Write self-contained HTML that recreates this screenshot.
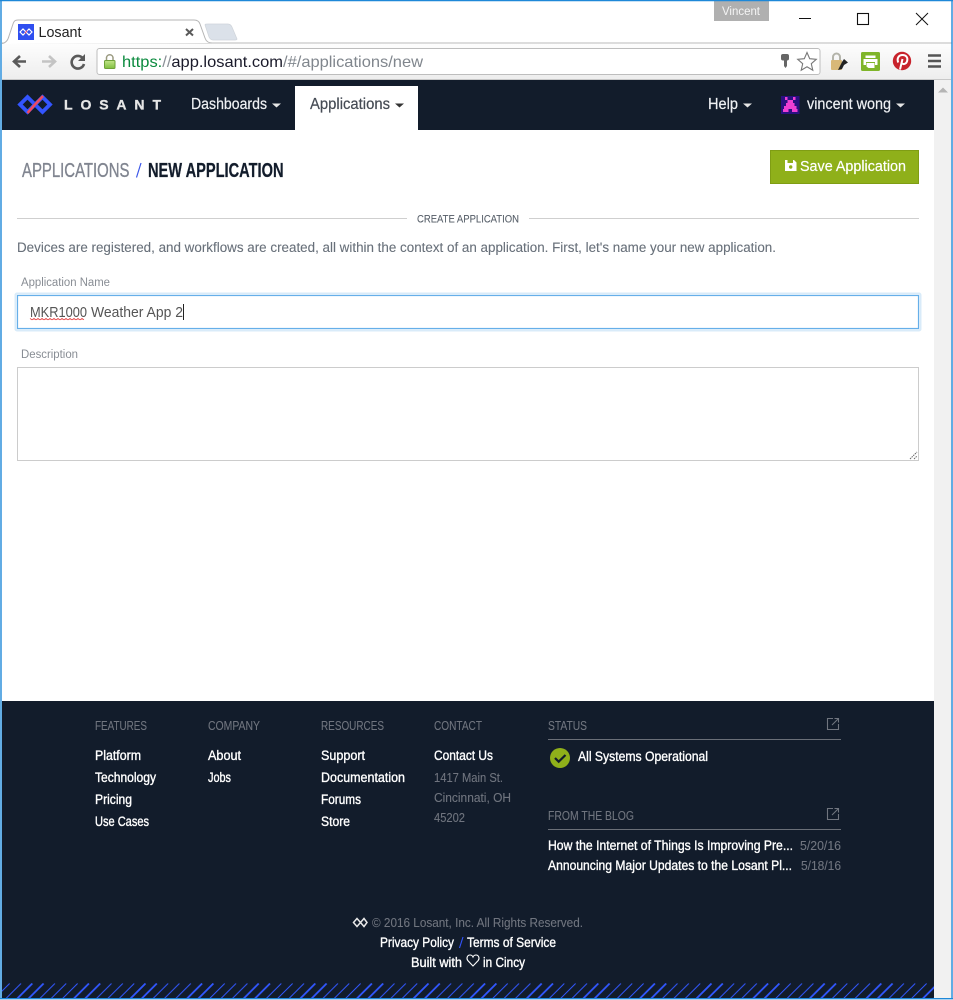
<!DOCTYPE html>
<html lang="en"><head><meta charset="utf-8"><title>Losant</title>
<style>
html,body{margin:0;padding:0;background:#fff;overflow:hidden}
svg{display:block}
text{font-family:"Liberation Sans",sans-serif;white-space:pre}
.l{font-size:13.5px;fill:#fff;stroke:#fff;stroke-width:.35px}
.h{font-size:12.5px;fill:#70757f;stroke:#70757f;stroke-width:.1px}
.g{font-size:13px;fill:#70757f;stroke:#70757f;stroke-width:.1px}
.n{font-size:15.5px;fill:#eef0f3;stroke:#eef0f3;stroke-width:.2px}
</style></head><body>
<svg width="953" height="1000" viewBox="0 0 953 1000" xmlns="http://www.w3.org/2000/svg">
<defs>
<linearGradient id="tb" x1="0" y1="0" x2="0" y2="1"><stop offset="0" stop-color="#fdfdfd"/><stop offset="1" stop-color="#ededed"/></linearGradient>
<linearGradient id="lk" x1="0" y1="0" x2="0" y2="1"><stop offset="0" stop-color="#c3e58a"/><stop offset="1" stop-color="#7fbf3f"/></linearGradient>
<pattern id="st" x="0" y="983" width="56.6" height="15" patternUnits="userSpaceOnUse">
<g stroke="#3157ff" fill="none">
<path d="M6 15.500L21 .5" stroke-width="1"/>
<path d="M17.300 15.500L32.300 .5" stroke-width="1.800"/>
<path d="M28.600 15.500L43.600 .5" stroke-width="1.800"/>
<path d="M39.900 15.500L54.900 .5" stroke-width="1"/>
<path d="M51.200 15.500L66.200 .5" stroke-width="1"/>
<path d="M-5.400 15.500L9.600 .5" stroke-width="1"/>
</g></pattern>
</defs>

<!-- window frame -->
<rect width="953" height="1000" fill="#fff"/>

<!-- tab strip -->
<path d="M2 43H952" stroke="#b9b9b9" fill="none"/>
<path d="M2 43.500C6 43 8 40 9 36L13 24C14 21 15 20 18 20H194C197 20 199 21 200 24L205 38C206 41 208 43 212 43" fill="#fff" stroke="#b5b5b5" stroke-width="1"/>
<path d="M205 25C205 24 206 24 208 24H228C230 24 231 25 232 27L237 39C237 40 236 40 235 40H213C211 40 210 39 209 37Z" fill="#dbe1e9" stroke="#cfd4da" stroke-width=".7"/>
<rect x="18" y="24" width="16" height="16" fill="#2f4ff0"/>
<path d="M20 32L23 29L26 32L23 35ZM26 32L29 29L32 32L29 35Z" fill="none" stroke="#fff" stroke-width="1.200"/>
<path d="M25 33.500L27 30.500" stroke="#f0445a" stroke-width="1"/>
<text x="38.500" y="37" font-size="14.500" fill="#222" textLength="43" lengthAdjust="spacingAndGlyphs">Losant</text>
<path d="M186 29L193 35.500M193 29L186 35.500" stroke="#5a5a5a" stroke-width="2" fill="none"/>

<!-- toolbar -->
<rect x="2" y="44" width="949" height="36" fill="url(#tb)"/>
<rect x="2" y="79" width="949" height="1" fill="#c8c8c8"/>
<path d="M26 61.500H15M20 56L14 61.500L20 67" fill="none" stroke="#5a5a5a" stroke-width="2.600"/>
<path d="M42 61.500H54M49 56L55 61.500L49 67" fill="none" stroke="#c4c4c4" stroke-width="2.600"/>
<path d="M83 58.500A6.300 6.300 0 1 0 84 64" fill="none" stroke="#5a5a5a" stroke-width="2.600"/>
<path d="M85 54V61H78Z" fill="#5a5a5a"/>
<rect x="97" y="48.500" width="723" height="26" rx="2.500" fill="#fff" stroke="#bdbdbd"/>
<rect x="104.500" y="60.500" width="10.500" height="8" rx="1" fill="url(#lk)" stroke="#6ea238"/>
<path d="M106.500 60V57.500A3.300 3.300 0 0 1 113 57.500V60" fill="none" stroke="#9a9a80" stroke-width="1.500"/>
<text y="67" font-size="16" textLength="301" x="122" lengthAdjust="spacingAndGlyphs"><tspan fill="#0b8a3e">https:</tspan><tspan fill="#8a8f96">//</tspan><tspan fill="#1a1a2a">app.losant.com</tspan><tspan fill="#80868d">/#/applications/new</tspan></text>
<!-- key & star -->
<rect x="781" y="54" width="8" height="6.500" rx="2" fill="#666"/>
<path d="M784 60H787V66L785.500 68L784 66Z" fill="#666"/>
<path d="M807 52.500L809.700 58.700L816.300 59.300L811.300 63.700L812.800 70.200L807 66.800L801.200 70.200L802.700 63.700L797.700 59.300L804.300 58.700Z" fill="#fff" stroke="#777" stroke-width="1.100"/>
<!-- extension: lock -->
<rect x="831" y="60" width="11" height="10" rx="1" fill="#d8b878"/>
<path d="M833 60V57A3.500 3.500 0 0 1 840 57V60" fill="none" stroke="#b4b4aa" stroke-width="2"/>
<path d="M842 62L844 59L848 62.500L844 65L842 69L838 70Z" fill="#222"/>
<!-- extension: print -->
<rect x="861" y="52" width="19" height="19" rx="1.500" fill="#7fb52a"/>
<path d="M865.500 55.500H875.500V58H865.500ZM863.500 59H877.500V65H875V62H866V65H863.500Z" fill="#fff"/>
<path d="M866.500 63H874.500V68H868.500L866.500 66.500Z" fill="#fff"/>
<!-- extension: pinterest -->
<circle cx="902" cy="61" r="9.200" fill="#c8232c"/>
<path d="M900 69.500L902.500 59M898.200 62.500C896.500 58 899 55 902.500 55C906 55 907.700 57.300 907.300 60.200C906.800 63.500 903.800 65 902 63.300" fill="none" stroke="#fff" stroke-width="2"/>
<!-- menu -->
<path d="M928 55.500H941M928 61H941M928 66.500H941" stroke="#555" stroke-width="2.400"/>

<!-- window controls -->
<rect x="714" y="1" width="55" height="20" fill="#b0b0b0"/>
<text x="722" y="15" font-size="11.500" fill="#f4f4f4" textLength="38" lengthAdjust="spacingAndGlyphs">Vincent</text>
<path d="M799 18.500H811" stroke="#111" stroke-width="1"/>
<rect x="857.500" y="13.500" width="11" height="11" fill="none" stroke="#111" stroke-width="1.100"/>
<path d="M916 13L928 25M928 13L916 25" stroke="#111" stroke-width="1"/>

<!-- nav -->
<rect x="2" y="80" width="932" height="50" fill="#121c2b"/>
<path d="M35 104.500L27.500 97L20 104.500L27.500 112L35 104.500L42.500 97L50 104.500L42.500 112Z" fill="none" stroke="#3355ff" stroke-width="3.800"/>
<path d="M27.500 113L35 104.500L43 96" fill="none" stroke="#ef4a5f" stroke-width="2.600"/>
<text x="64" y="109.500" font-size="14" font-weight="700" fill="#e6e6e6" stroke="#e6e6e6" stroke-width=".3" textLength="97" lengthAdjust="spacing">LOSANT</text>
<text class="n" x="191" y="109" textLength="76" lengthAdjust="spacingAndGlyphs">Dashboards</text>
<path d="M272 103.500H281L276.500 107.500Z" fill="#e6e6e6"/>
<rect x="295" y="86" width="123" height="44" fill="#fff"/>
<text class="n" x="310" y="109" style="fill:#454b54;stroke:#454b54" textLength="80" lengthAdjust="spacingAndGlyphs">Applications</text>
<path d="M395 103.500H404L399.500 107.500Z" fill="#333"/>
<text class="n" x="708" y="109" textLength="30" lengthAdjust="spacingAndGlyphs">Help</text>
<path d="M743 103.500H752L747.500 107.500Z" fill="#e6e6e6"/>
<rect x="781" y="96" width="18.500" height="18" fill="#2a1080"/>
<path d="M785 97H787.500V100H793V97H795.500V100H793V103H794.500V106H796.500V109H797.500V112H792V109H788.500V112H783V109H784V106H786V103H787.500V100H785Z" fill="#ee3fd4"/>
<text class="n" x="807" y="109" textLength="84" lengthAdjust="spacingAndGlyphs">vincent wong</text>
<path d="M896 103.500H905L900.500 107.500Z" fill="#e6e6e6"/>

<!-- scrollbar -->
<rect x="934" y="80" width="17" height="918" fill="#f1f1f1"/>
<path d="M938 92.500L943 87.500L948 92.500Z" fill="#b5b5b5"/>

<!-- heading -->
<text x="22" y="177" font-size="20" fill="#808590" stroke="#808590" stroke-width=".35" textLength="107.500" lengthAdjust="spacingAndGlyphs">APPLICATIONS</text>
<path d="M136.500 177.500L141 163" stroke="#3a55e8" stroke-width="1.200"/>
<text x="148" y="177" font-size="20" font-weight="700" fill="#121c2b" stroke="#121c2b" stroke-width=".25" textLength="135.500" lengthAdjust="spacingAndGlyphs">NEW APPLICATION</text>

<!-- save button -->
<rect x="770.500" y="150.500" width="148" height="33" fill="#8fb01a" stroke="#7f9d14"/>
<path d="M785 160H794L796.500 162.500V171H785Z" fill="#fff"/>
<rect x="787.500" y="160" width="5.500" height="3" fill="#8fb01a"/>
<circle cx="790.700" cy="167" r="1.700" fill="#8fb01a"/>
<text x="800" y="171" font-size="15" fill="#fff" stroke="#fff" stroke-width=".2" textLength="106" lengthAdjust="spacingAndGlyphs">Save Application</text>

<!-- section divider -->
<path d="M17 218.500H407M529 218.500H919" stroke="#cfcfcf"/>
<text x="417" y="222.500" font-size="11" fill="#58606a" stroke="#58606a" stroke-width=".1" textLength="102" lengthAdjust="spacingAndGlyphs">CREATE APPLICATION</text>
<text x="17" y="252" font-size="13.500" fill="#68707a" stroke="#68707a" stroke-width=".1" textLength="759" lengthAdjust="spacingAndGlyphs">Devices are registered, and workflows are created, all within the context of an application. First, let's name your new application.</text>

<!-- form -->
<text x="21" y="286" font-size="11.500" fill="#888d94" textLength="89" lengthAdjust="spacingAndGlyphs">Application Name</text>
<rect x="15.500" y="293.500" width="905" height="37" rx="1.500" fill="none" stroke="#66afe9" stroke-opacity=".25" stroke-width="2"/>
<rect x="17.500" y="295.500" width="901" height="33" fill="#fff" stroke="#66afe9" stroke-width="1.200"/>
<text x="30" y="317" font-size="15" fill="#555" textLength="57" lengthAdjust="spacingAndGlyphs">MKR1000</text>
<text x="91" y="317" font-size="15" fill="#555" textLength="92" lengthAdjust="spacingAndGlyphs">Weather App 2</text>
<path d="M183.500 304V320" stroke="#222"/>
<path d="M30 318.500l2 1.300 2-1.300 2 1.300 2-1.300 2 1.300 2-1.300 2 1.300 2-1.300 2 1.300 2-1.300 2 1.300 2-1.300 2 1.300 2-1.300 2 1.300 2-1.300 2 1.300 2-1.300 2 1.300 2-1.300 2 1.300 2-1.300 2 1.300 2-1.300 2 1.300 2-1.300 2 1.300" fill="none" stroke="#e23b3b" stroke-width=".8"/>
<text x="21" y="358" font-size="11.500" fill="#888d94" textLength="57" lengthAdjust="spacingAndGlyphs">Description</text>
<rect x="17.500" y="367.500" width="901" height="93" fill="#fff" stroke="#cccccc"/>
<path d="M910 459L917 452M914 459L917 456" stroke="#666" stroke-width="1" stroke-dasharray="1.500 .8"/>

<!-- footer -->
<rect x="2" y="701" width="932" height="297" fill="#121c2b"/>
<text class="h" x="95" y="730" textLength="52" lengthAdjust="spacingAndGlyphs">FEATURES</text>
<text class="h" x="208" y="730" textLength="52" lengthAdjust="spacingAndGlyphs">COMPANY</text>
<text class="h" x="321" y="730" textLength="63" lengthAdjust="spacingAndGlyphs">RESOURCES</text>
<text class="h" x="434" y="730" textLength="48" lengthAdjust="spacingAndGlyphs">CONTACT</text>
<text class="h" x="548" y="730" textLength="39" lengthAdjust="spacingAndGlyphs">STATUS</text>

<text class="l" x="95" y="760" textLength="46" lengthAdjust="spacingAndGlyphs">Platform</text>
<text class="l" x="95" y="782" textLength="61" lengthAdjust="spacingAndGlyphs">Technology</text>
<text class="l" x="95" y="804" textLength="37" lengthAdjust="spacingAndGlyphs">Pricing</text>
<text class="l" x="95" y="826" textLength="54" lengthAdjust="spacingAndGlyphs">Use Cases</text>
<text class="l" x="208" y="760" textLength="33" lengthAdjust="spacingAndGlyphs">About</text>
<text class="l" x="208" y="782" textLength="23" lengthAdjust="spacingAndGlyphs">Jobs</text>
<text class="l" x="321" y="760" textLength="44" lengthAdjust="spacingAndGlyphs">Support</text>
<text class="l" x="321" y="782" textLength="84" lengthAdjust="spacingAndGlyphs">Documentation</text>
<text class="l" x="321" y="804" textLength="40" lengthAdjust="spacingAndGlyphs">Forums</text>
<text class="l" x="321" y="826" textLength="29" lengthAdjust="spacingAndGlyphs">Store</text>
<text class="l" x="434" y="760" textLength="59" lengthAdjust="spacingAndGlyphs">Contact Us</text>
<text class="g" x="434" y="782" textLength="69" lengthAdjust="spacingAndGlyphs">1417 Main St.</text>
<text class="g" x="434" y="802" textLength="77" lengthAdjust="spacingAndGlyphs">Cincinnati, OH</text>
<text class="g" x="434" y="822" textLength="31" lengthAdjust="spacingAndGlyphs">45202</text>

<path d="M548 739.500H841M548 829.500H841" stroke="#6a6f78"/>
<g fill="none" stroke="#70757f" stroke-width="1.100">
<path d="M833 718.500H827.500V729.500H838.500V724M832 725L838.500 718.500M834.500 718.500H838.500V722.500"/>
<path d="M833 808.500H827.500V819.500H838.500V814M832 815L838.500 808.500M834.500 808.500H838.500V812.500"/>
</g>
<circle cx="560" cy="758" r="10" fill="#8fb01a"/>
<path d="M555 758L558.700 761.700L565.500 755" fill="none" stroke="#121c2b" stroke-width="2.200"/>
<text class="l" x="578" y="761" textLength="130" lengthAdjust="spacingAndGlyphs">All Systems Operational</text>
<text class="h" x="548" y="820" textLength="86" lengthAdjust="spacingAndGlyphs">FROM THE BLOG</text>
<text class="l" x="548" y="850" textLength="245" lengthAdjust="spacingAndGlyphs">How the Internet of Things Is Improving Pre...</text>
<text class="g" x="800" y="850" textLength="41" lengthAdjust="spacingAndGlyphs">5/20/16</text>
<text class="l" x="548" y="870" textLength="244" lengthAdjust="spacingAndGlyphs">Announcing Major Updates to the Losant Pl...</text>
<text class="g" x="801" y="870" textLength="40" lengthAdjust="spacingAndGlyphs">5/18/16</text>

<path d="M357 918.500L353.500 922.500L357 926.500L360.500 922.500L364 918.500L367 922.500L364 926.500L360.500 922.500Z" fill="none" stroke="#e8e8e8" stroke-width="1.500"/>
<text class="g" x="372" y="927" textLength="211" lengthAdjust="spacingAndGlyphs">© 2016 Losant, Inc. All Rights Reserved.</text>
<text class="l" x="380" y="947" textLength="74" lengthAdjust="spacingAndGlyphs">Privacy Policy</text>
<path d="M459.500 948L463 937" stroke="#3355ff" stroke-width="1.100"/>
<text class="l" x="467" y="947" textLength="89" lengthAdjust="spacingAndGlyphs">Terms of Service</text>
<text class="l" x="411" y="967" textLength="51" lengthAdjust="spacingAndGlyphs">Built with</text>
<path d="M473 966L467.800 960.500C466 958 467.500 955 470 955C471.500 955 472.500 955.800 473 957C473.500 955.800 474.500 955 476 955C478.500 955 480 958 478.200 960.500Z" fill="none" stroke="#fff" stroke-width="1.100"/>
<text class="l" x="483" y="967" textLength="42" lengthAdjust="spacingAndGlyphs">in Cincy</text>
<rect x="2" y="983" width="932" height="15" fill="url(#st)"/>

<!-- window border on top -->
<path d="M1 0V999M0 .5H953M952 0V999M0 998.700H953" stroke="#1e88d8" stroke-width="1.400" fill="none"/>
</svg>
</body></html>
